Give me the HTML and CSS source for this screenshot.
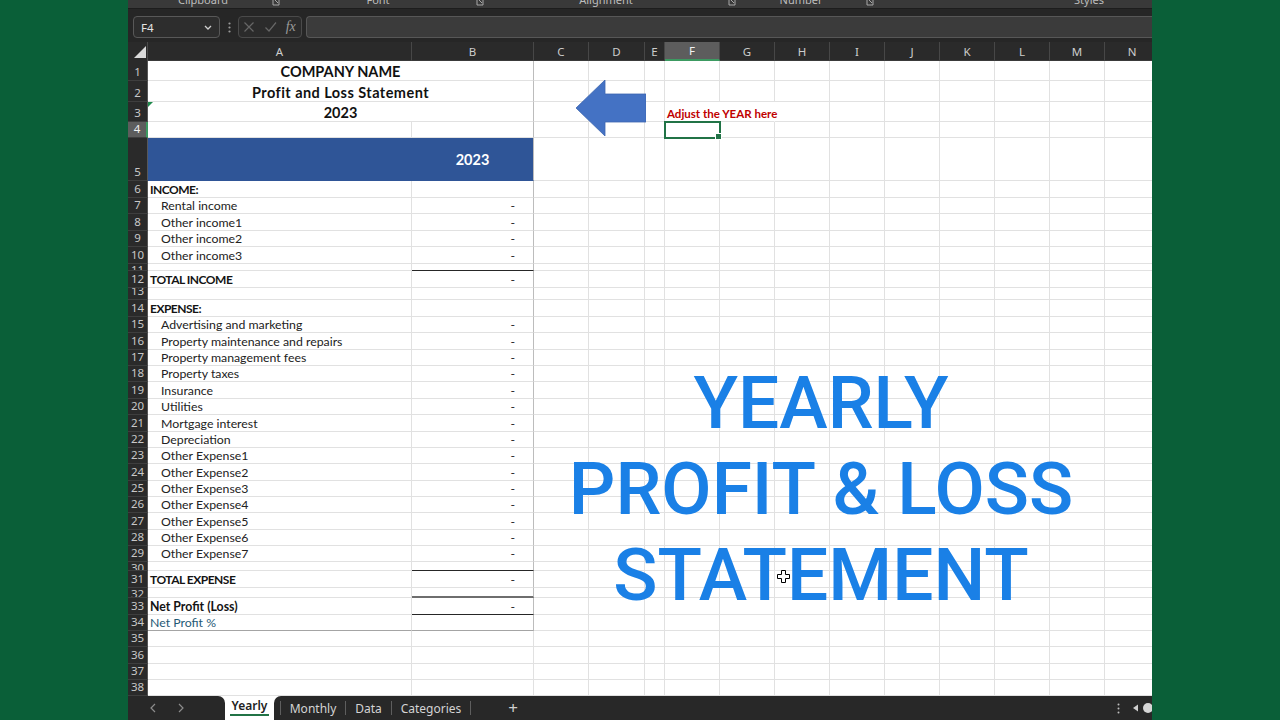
FILE: index.html
```html
<!DOCTYPE html>
<html lang="en">
<head>
<meta charset="utf-8">
<title>Yearly Profit &amp; Loss Statement</title>
<link rel="stylesheet" href="styles.css">
</head>
<body>
<div class="stage">
  <div class="excel">
    <div class="ribbon">
      <div class="grp g1"><span class="lbl">Clipboard</span><span class="lau"><svg viewBox="0 0 8 6" width="8" height="6"><path d="M1 0v5h6V0" fill="none" stroke="#a8a8a8" stroke-width="1"/><path d="M3 0l3 3" stroke="#a8a8a8" stroke-width="1"/></svg></span></div>
      <div class="grp g2"><span class="lbl">Font</span><span class="lau"><svg viewBox="0 0 8 6" width="8" height="6"><path d="M1 0v5h6V0" fill="none" stroke="#a8a8a8" stroke-width="1"/><path d="M3 0l3 3" stroke="#a8a8a8" stroke-width="1"/></svg></span></div>
      <div class="grp g3"><span class="lbl">Alignment</span><span class="lau"><svg viewBox="0 0 8 6" width="8" height="6"><path d="M1 0v5h6V0" fill="none" stroke="#a8a8a8" stroke-width="1"/><path d="M3 0l3 3" stroke="#a8a8a8" stroke-width="1"/></svg></span></div>
      <div class="grp g4"><span class="lbl">Number</span><span class="lau"><svg viewBox="0 0 8 6" width="8" height="6"><path d="M1 0v5h6V0" fill="none" stroke="#a8a8a8" stroke-width="1"/><path d="M3 0l3 3" stroke="#a8a8a8" stroke-width="1"/></svg></span></div>
      <div class="grp g5"><span class="lbl">Styles</span></div>
    </div>

    <div class="fbar">
      <div class="namebox"><span>F4</span><svg class="chev" viewBox="0 0 8 5" width="8" height="5"><path d="M1 1l3 3 3-3" fill="none" stroke="#d0d0d0" stroke-width="1.3"/></svg></div>
      <div class="dots"><svg viewBox="0 0 3 11" width="3" height="11"><circle cx="1.5" cy="1.5" r="1.1" fill="#9a9a9a"/><circle cx="1.5" cy="5.5" r="1.1" fill="#9a9a9a"/><circle cx="1.5" cy="9.5" r="1.1" fill="#9a9a9a"/></svg></div>
      <div class="fxbox">
        <span class="fxi"><svg viewBox="0 0 12 12" width="12" height="12"><path d="M1.5 1.5l9 9M10.5 1.5l-9 9" stroke="#666" stroke-width="1.2"/></svg></span>
        <span class="fxi"><svg viewBox="0 0 12 12" width="13" height="12"><path d="M1 6.5l3.5 3.5L11.5 1.5" fill="none" stroke="#666" stroke-width="1.2"/></svg></span>
        <span class="fxi fx">fx</span>
      </div>
      <div class="finput"></div>
    </div>

    <div class="sheet">
      <div class="row hdr">
        <div class="corner"><svg viewBox="0 0 20 19" width="20" height="19"><polygon points="18,4 18,16 6,16" fill="#dadada"/></svg></div>
        <div class="ch">A</div><div class="ch">B</div><div class="ch">C</div><div class="ch">D</div><div class="ch">E</div><div class="ch sel">F</div><div class="ch">G</div><div class="ch">H</div><div class="ch">I</div><div class="ch">J</div><div class="ch">K</div><div class="ch">L</div><div class="ch">M</div><div class="ch">N</div>
      </div>

      <div class="row h20"><div class="rh">1</div><div class="c m2 edge">COMPANY NAME</div><div class="c"></div><div class="c"></div><div class="c"></div><div class="c"></div><div class="c"></div><div class="c"></div><div class="c"></div><div class="c"></div><div class="c"></div><div class="c"></div><div class="c"></div><div class="c"></div></div>
      <div class="row h21"><div class="rh">2</div><div class="c m2 edge wide">Profit and Loss Statement</div><div class="c"></div><div class="c"></div><div class="c"></div><div class="c"></div><div class="c"></div><div class="c"></div><div class="c"></div><div class="c"></div><div class="c"></div><div class="c"></div><div class="c"></div><div class="c"></div></div>
      <div class="row h20"><div class="rh">3</div><div class="c m2 edge err">2023</div><div class="c"></div><div class="c"></div><div class="c"></div><div class="c note">Adjust the YEAR here</div><div class="c nob"></div><div class="c"></div><div class="c"></div><div class="c"></div><div class="c"></div><div class="c"></div><div class="c"></div><div class="c"></div></div>
      <div class="row h16"><div class="rh sel">4</div><div class="c"></div><div class="c edge"></div><div class="c"></div><div class="c"></div><div class="c"></div><div class="c sel"></div><div class="c"></div><div class="c"></div><div class="c"></div><div class="c"></div><div class="c"></div><div class="c"></div><div class="c"></div><div class="c"></div></div>
      <div class="row h43"><div class="rh">5</div><div class="c blueA"></div><div class="c blueB edge yr">2023</div><div class="c"></div><div class="c"></div><div class="c"></div><div class="c"></div><div class="c"></div><div class="c"></div><div class="c"></div><div class="c"></div><div class="c"></div><div class="c"></div><div class="c"></div><div class="c"></div></div>
      <div class="row h165"><div class="rh">6</div><div class="c bd cap">INCOME:</div><div class="c edge"></div><div class="c"></div><div class="c"></div><div class="c"></div><div class="c"></div><div class="c"></div><div class="c"></div><div class="c"></div><div class="c"></div><div class="c"></div><div class="c"></div><div class="c"></div><div class="c"></div></div>
      <div class="row h165"><div class="rh">7</div><div class="c in">Rental income</div><div class="c num edge">-</div><div class="c"></div><div class="c"></div><div class="c"></div><div class="c"></div><div class="c"></div><div class="c"></div><div class="c"></div><div class="c"></div><div class="c"></div><div class="c"></div><div class="c"></div><div class="c"></div></div>
      <div class="row h165"><div class="rh">8</div><div class="c in">Other income1</div><div class="c num edge">-</div><div class="c"></div><div class="c"></div><div class="c"></div><div class="c"></div><div class="c"></div><div class="c"></div><div class="c"></div><div class="c"></div><div class="c"></div><div class="c"></div><div class="c"></div><div class="c"></div></div>
      <div class="row h165"><div class="rh">9</div><div class="c in">Other income2</div><div class="c num edge">-</div><div class="c"></div><div class="c"></div><div class="c"></div><div class="c"></div><div class="c"></div><div class="c"></div><div class="c"></div><div class="c"></div><div class="c"></div><div class="c"></div><div class="c"></div><div class="c"></div></div>
      <div class="row h165"><div class="rh">10</div><div class="c in">Other income3</div><div class="c num edge">-</div><div class="c"></div><div class="c"></div><div class="c"></div><div class="c"></div><div class="c"></div><div class="c"></div><div class="c"></div><div class="c"></div><div class="c"></div><div class="c"></div><div class="c"></div><div class="c"></div></div>
      <div class="row h75"><div class="rh top">11</div><div class="c"></div><div class="c edge tl"></div><div class="c"></div><div class="c"></div><div class="c"></div><div class="c"></div><div class="c"></div><div class="c"></div><div class="c"></div><div class="c"></div><div class="c"></div><div class="c"></div><div class="c"></div><div class="c"></div></div>
      <div class="row h17"><div class="rh">12</div><div class="c bd cap">TOTAL INCOME</div><div class="c num edge">-</div><div class="c"></div><div class="c"></div><div class="c"></div><div class="c"></div><div class="c"></div><div class="c"></div><div class="c"></div><div class="c"></div><div class="c"></div><div class="c"></div><div class="c"></div><div class="c"></div></div>
      <div class="row h12"><div class="rh">13</div><div class="c"></div><div class="c edge"></div><div class="c"></div><div class="c"></div><div class="c"></div><div class="c"></div><div class="c"></div><div class="c"></div><div class="c"></div><div class="c"></div><div class="c"></div><div class="c"></div><div class="c"></div><div class="c"></div></div>
      <div class="row h17"><div class="rh">14</div><div class="c bd cap">EXPENSE:</div><div class="c edge"></div><div class="c"></div><div class="c"></div><div class="c"></div><div class="c"></div><div class="c"></div><div class="c"></div><div class="c"></div><div class="c"></div><div class="c"></div><div class="c"></div><div class="c"></div><div class="c"></div></div>
      <div class="row hn"><div class="rh">15</div><div class="c in">Advertising and marketing</div><div class="c num edge">-</div><div class="c"></div><div class="c"></div><div class="c"></div><div class="c"></div><div class="c"></div><div class="c"></div><div class="c"></div><div class="c"></div><div class="c"></div><div class="c"></div><div class="c"></div><div class="c"></div></div>
      <div class="row hn"><div class="rh">16</div><div class="c in">Property maintenance and repairs</div><div class="c num edge">-</div><div class="c"></div><div class="c"></div><div class="c"></div><div class="c"></div><div class="c"></div><div class="c"></div><div class="c"></div><div class="c"></div><div class="c"></div><div class="c"></div><div class="c"></div><div class="c"></div></div>
      <div class="row hn"><div class="rh">17</div><div class="c in">Property management fees</div><div class="c num edge">-</div><div class="c"></div><div class="c"></div><div class="c"></div><div class="c"></div><div class="c"></div><div class="c"></div><div class="c"></div><div class="c"></div><div class="c"></div><div class="c"></div><div class="c"></div><div class="c"></div></div>
      <div class="row hn"><div class="rh">18</div><div class="c in">Property taxes</div><div class="c num edge">-</div><div class="c"></div><div class="c"></div><div class="c"></div><div class="c"></div><div class="c"></div><div class="c"></div><div class="c"></div><div class="c"></div><div class="c"></div><div class="c"></div><div class="c"></div><div class="c"></div></div>
      <div class="row hn"><div class="rh">19</div><div class="c in">Insurance</div><div class="c num edge">-</div><div class="c"></div><div class="c"></div><div class="c"></div><div class="c"></div><div class="c"></div><div class="c"></div><div class="c"></div><div class="c"></div><div class="c"></div><div class="c"></div><div class="c"></div><div class="c"></div></div>
      <div class="row hn"><div class="rh">20</div><div class="c in">Utilities</div><div class="c num edge">-</div><div class="c"></div><div class="c"></div><div class="c"></div><div class="c"></div><div class="c"></div><div class="c"></div><div class="c"></div><div class="c"></div><div class="c"></div><div class="c"></div><div class="c"></div><div class="c"></div></div>
      <div class="row hn"><div class="rh">21</div><div class="c in">Mortgage interest</div><div class="c num edge">-</div><div class="c"></div><div class="c"></div><div class="c"></div><div class="c"></div><div class="c"></div><div class="c"></div><div class="c"></div><div class="c"></div><div class="c"></div><div class="c"></div><div class="c"></div><div class="c"></div></div>
      <div class="row hn"><div class="rh">22</div><div class="c in">Depreciation</div><div class="c num edge">-</div><div class="c"></div><div class="c"></div><div class="c"></div><div class="c"></div><div class="c"></div><div class="c"></div><div class="c"></div><div class="c"></div><div class="c"></div><div class="c"></div><div class="c"></div><div class="c"></div></div>
      <div class="row hn"><div class="rh">23</div><div class="c in">Other Expense1</div><div class="c num edge">-</div><div class="c"></div><div class="c"></div><div class="c"></div><div class="c"></div><div class="c"></div><div class="c"></div><div class="c"></div><div class="c"></div><div class="c"></div><div class="c"></div><div class="c"></div><div class="c"></div></div>
      <div class="row hn"><div class="rh">24</div><div class="c in">Other Expense2</div><div class="c num edge">-</div><div class="c"></div><div class="c"></div><div class="c"></div><div class="c"></div><div class="c"></div><div class="c"></div><div class="c"></div><div class="c"></div><div class="c"></div><div class="c"></div><div class="c"></div><div class="c"></div></div>
      <div class="row hn"><div class="rh">25</div><div class="c in">Other Expense3</div><div class="c num edge">-</div><div class="c"></div><div class="c"></div><div class="c"></div><div class="c"></div><div class="c"></div><div class="c"></div><div class="c"></div><div class="c"></div><div class="c"></div><div class="c"></div><div class="c"></div><div class="c"></div></div>
      <div class="row hn"><div class="rh">26</div><div class="c in">Other Expense4</div><div class="c num edge">-</div><div class="c"></div><div class="c"></div><div class="c"></div><div class="c"></div><div class="c"></div><div class="c"></div><div class="c"></div><div class="c"></div><div class="c"></div><div class="c"></div><div class="c"></div><div class="c"></div></div>
      <div class="row hn"><div class="rh">27</div><div class="c in">Other Expense5</div><div class="c num edge">-</div><div class="c"></div><div class="c"></div><div class="c"></div><div class="c"></div><div class="c"></div><div class="c"></div><div class="c"></div><div class="c"></div><div class="c"></div><div class="c"></div><div class="c"></div><div class="c"></div></div>
      <div class="row hn"><div class="rh">28</div><div class="c in">Other Expense6</div><div class="c num edge">-</div><div class="c"></div><div class="c"></div><div class="c"></div><div class="c"></div><div class="c"></div><div class="c"></div><div class="c"></div><div class="c"></div><div class="c"></div><div class="c"></div><div class="c"></div><div class="c"></div></div>
      <div class="row hn"><div class="rh">29</div><div class="c in">Other Expense7</div><div class="c num edge">-</div><div class="c"></div><div class="c"></div><div class="c"></div><div class="c"></div><div class="c"></div><div class="c"></div><div class="c"></div><div class="c"></div><div class="c"></div><div class="c"></div><div class="c"></div><div class="c"></div></div>
      <div class="row h86"><div class="rh top">30</div><div class="c"></div><div class="c edge tl"></div><div class="c"></div><div class="c"></div><div class="c"></div><div class="c"></div><div class="c"></div><div class="c"></div><div class="c"></div><div class="c"></div><div class="c"></div><div class="c"></div><div class="c"></div><div class="c"></div></div>
      <div class="row h17"><div class="rh">31</div><div class="c bd cap">TOTAL EXPENSE</div><div class="c num edge">-</div><div class="c"></div><div class="c"></div><div class="c"></div><div class="c"></div><div class="c"></div><div class="c"></div><div class="c"></div><div class="c"></div><div class="c"></div><div class="c"></div><div class="c"></div><div class="c"></div></div>
      <div class="row h10"><div class="rh top">32</div><div class="c"></div><div class="c edge tl2"></div><div class="c"></div><div class="c"></div><div class="c"></div><div class="c"></div><div class="c"></div><div class="c"></div><div class="c"></div><div class="c"></div><div class="c"></div><div class="c"></div><div class="c"></div><div class="c"></div></div>
      <div class="row h17"><div class="rh">33</div><div class="c bd">Net Profit (Loss)</div><div class="c num edge tl">-</div><div class="c"></div><div class="c"></div><div class="c"></div><div class="c"></div><div class="c"></div><div class="c"></div><div class="c"></div><div class="c"></div><div class="c"></div><div class="c"></div><div class="c"></div><div class="c"></div></div>
      <div class="row h162"><div class="rh">34</div><div class="c teal bt">Net Profit %</div><div class="c edge bt"></div><div class="c"></div><div class="c"></div><div class="c"></div><div class="c"></div><div class="c"></div><div class="c"></div><div class="c"></div><div class="c"></div><div class="c"></div><div class="c"></div><div class="c"></div><div class="c"></div></div>
      <div class="row h162"><div class="rh">35</div><div class="c"></div><div class="c"></div><div class="c"></div><div class="c"></div><div class="c"></div><div class="c"></div><div class="c"></div><div class="c"></div><div class="c"></div><div class="c"></div><div class="c"></div><div class="c"></div><div class="c"></div><div class="c"></div></div>
      <div class="row h162"><div class="rh">36</div><div class="c"></div><div class="c"></div><div class="c"></div><div class="c"></div><div class="c"></div><div class="c"></div><div class="c"></div><div class="c"></div><div class="c"></div><div class="c"></div><div class="c"></div><div class="c"></div><div class="c"></div><div class="c"></div></div>
      <div class="row h162"><div class="rh">37</div><div class="c"></div><div class="c"></div><div class="c"></div><div class="c"></div><div class="c"></div><div class="c"></div><div class="c"></div><div class="c"></div><div class="c"></div><div class="c"></div><div class="c"></div><div class="c"></div><div class="c"></div><div class="c"></div></div>
      <div class="row h162"><div class="rh">38</div><div class="c"></div><div class="c"></div><div class="c"></div><div class="c"></div><div class="c"></div><div class="c"></div><div class="c"></div><div class="c"></div><div class="c"></div><div class="c"></div><div class="c"></div><div class="c"></div><div class="c"></div><div class="c"></div></div>

      <svg class="arrow" viewBox="0 0 70 56" width="70" height="56"><polygon points="0,28 29,0 29,14 70,14 70,42 29,42 29,56" fill="#4472c4" stroke="#3d66b0" stroke-width="0.8"/></svg>

      <div class="title">
        <div>YEARLY</div>
        <div>PROFIT &amp; LOSS</div>
        <div>STATEMENT</div>
      </div>

      <svg class="cursor" viewBox="0 0 13 13" width="13" height="13"><path d="M4.5 0.5h4v4h4v4h-4v4h-4v-4h-4v-4h4z" fill="#fff" stroke="#000" stroke-width="1"/></svg>
    </div>

    <div class="tabs">
      <div class="nav">
        <svg class="navi" viewBox="0 0 6 10" width="6" height="10"><path d="M5 1L1 5l4 4" fill="none" stroke="#8c8c8c" stroke-width="1.2"/></svg>
        <svg class="navi" viewBox="0 0 6 10" width="6" height="10"><path d="M1 1l4 4-4 4" fill="none" stroke="#8c8c8c" stroke-width="1.2"/></svg>
      </div>
      <div class="active"><span>Yearly</span></div>
      <div class="rest">
        <span class="sep"></span>
        <span class="tab t1">Monthly</span>
        <span class="sep"></span>
        <span class="tab t2">Data</span>
        <span class="sep"></span>
        <span class="tab t3">Categories</span>
        <span class="sep"></span>
        <span class="plus">+</span>
        <span class="spacer"></span>
        <span class="more"><svg viewBox="0 0 3 11" width="3" height="11"><circle cx="1.5" cy="1.5" r="1" fill="#bdbdbd"/><circle cx="1.5" cy="5.5" r="1" fill="#bdbdbd"/><circle cx="1.5" cy="9.5" r="1" fill="#bdbdbd"/></svg></span>
        <span class="scr"><svg viewBox="0 0 24 24" width="24" height="24"><polygon points="5,12 10,8.5 10,15.5" fill="#cfcfcf"/><circle cx="20" cy="12" r="5" fill="#d6d6d6"/></svg></span>
      </div>
    </div>
  </div>
</div>
</body>
</html>
```

FILE: styles.css
```css
* { box-sizing: border-box; }
html, body { margin: 0; padding: 0; }
body {
  width: 1280px;
  height: 720px;
  overflow: hidden;
  background: #0a5f38;
  font-family: "Noto Sans", "DejaVu Sans", sans-serif;
}

.stage {
  display: flex;
  width: 1280px;
  height: 720px;
  padding-left: 128px;
  background: #0a5f38;
}

.excel {
  width: 1024px;
  height: 720px;
  display: flex;
  flex-direction: column;
  overflow: hidden;
  background: #282828;
}

/* ribbon remnant */
.ribbon {
  height: 8px;
  flex: none;
  display: flex;
  background: #393939;
  overflow: hidden;
  padding-left: 9px;
}
.grp { display: flex; flex: none; }
.g1 { width: 146px; }
.g2 { width: 204px; }
.g3 { width: 252px; }
.g4 { width: 138px; }
.g5 { width: 410px; padding-left: 14px; }
.lbl {
  flex: 1;
  text-align: center;
  font-size: 11px;
  line-height: 12px;
  color: #bdbdbd;
  margin-top: -6px;
}
.lau { width: 14px; display: flex; justify-content: center; align-items: flex-start; }

/* formula bar */
.fbar {
  height: 34px;
  flex: none;
  display: flex;
  align-items: flex-start;
  padding: 7px 0 0 5px;
  background: #262626;
  border-top: 1px solid #1d1d1d;
}
.namebox {
  width: 87px;
  height: 22px;
  display: flex;
  align-items: center;
  justify-content: space-between;
  padding: 0 7px 0 7px;
  background: #2d2d2d;
  border: 1px solid #585858;
  border-radius: 4px;
  color: #e4e4e4;
  font-size: 11.5px;
}
.dots { width: 18px; height: 22px; display: flex; align-items: center; justify-content: center; }
.fxbox {
  width: 64px;
  height: 22px;
  display: flex;
  align-items: center;
  background: #2b2b2b;
  border: 1px solid #4a4a4a;
  border-radius: 4px;
}
.fxi { width: 21px; display: flex; justify-content: center; align-items: center; }
.fx {
  font-family: "Liberation Serif", serif;
  font-style: italic;
  font-size: 14px;
  color: #9a9a9a;
}
.finput {
  flex: 1;
  height: 22px;
  margin-left: 4px;
  background: #3b3b3b;
  border: 1px solid #575757;
  border-right: none;
  border-radius: 4px 0 0 4px;
}

/* sheet */
.sheet {
  flex: 1;
  position: relative;
  background: #ffffff;
  display: flex;
  flex-direction: column;
  overflow: hidden;
}
.row {
  display: grid;
  grid-template-columns: 20px 264px 122px 55px 56px 20px 55px 55px 55px 55px 55px 55px 55px 55px 55px;
  flex: none;
}
.hdr { height: 19px; background: #2a2a2a; }
.corner { background: #2a2a2a; border-right: 1px solid #4a4a4a; }
.corner svg { display: block; }
.ch {
  display: flex;
  align-items: center;
  justify-content: center;
  color: #cdcdcd;
  font-size: 11.5px;
  border-right: 1px solid #474747;
  border-bottom: 1px solid #3a3a3a;
}
.ch.sel {
  background: #5d5d5d;
  color: #f2f2f2;
  border-bottom: 2px solid #3c9a61;
}

.h20 { height: 20px; }
.h21 { height: 21px; }
.h16 { height: 16px; }
.h43 { height: 43px; }
.h165 { height: 16.5px; }
.h75 { height: 7.5px; }
.h17 { height: 17px; }
.h12 { height: 12px; }
.hn { height: 16.36px; }
.h86 { height: 8.6px; }
.h10 { height: 10px; }
.h162 { height: 16.2px; }

.rh {
  display: flex;
  align-items: flex-end;
  justify-content: center;
  overflow: hidden;
  background: #2a2a2a;
  color: #c8c8c8;
  font-size: 11.5px;
  line-height: 16px;
  border-bottom: 1px solid #3e3e3e;
  border-right: 1px solid #575757;
}
.rh.top { align-items: flex-start; line-height: 12px; }
.rh.sel {
  background: #5d5d5d;
  color: #f2f2f2;
  border-right: 2px solid #3c9a61;
}

.c {
  display: flex;
  align-items: flex-end;
  min-width: 0;
  padding: 0 2px;
  overflow: hidden;
  white-space: nowrap;
  font-family: Lato, "Open Sans", sans-serif;
  font-size: 12.3px;
  line-height: 14px;
  color: #222222;
  border-right: 1px solid #e1e1e1;
  border-bottom: 1px solid #e1e1e1;
}
.m2 {
  grid-column: span 2;
  justify-content: center;
  font-weight: 700;
  font-size: 14.5px;
  line-height: 16px;
  color: #111;
}
.wide { letter-spacing: 0.45px; }
.in { padding-left: 13px; }
.bd { font-weight: 700; color: #141414; }
.cap { font-size: 12px; letter-spacing: -0.5px; }
.num { justify-content: flex-end; padding-right: 18px; }
.edge { border-right-color: #bcbcbc; }
.blueA { background: #2f5597; border-right-color: #2f5597; border-bottom-color: #2f5597; }
.blueB { background: #2f5597; border-bottom-color: #2f5597; }
.yr {
  color: #ffffff;
  font-weight: 700;
  font-size: 14.5px;
  justify-content: center;
  align-items: center;
  padding-top: 2px;
}
.tl { border-bottom: 1px solid #262626; }
.tl2 { border-bottom: 2px solid #6e6e6e; }
.bt { border-bottom-color: #a4a4a4; }
.teal { color: #1f5a76; }
.err { position: relative; }
.err::before {
  content: "";
  position: absolute;
  left: 0;
  top: 0;
  border-top: 5px solid #1f8a4c;
  border-right: 5px solid transparent;
}
.note {
  overflow: visible;
  color: #c00000;
  font-weight: 700;
  font-size: 11.5px;
  line-height: 14px;
  border-right-color: transparent;
}
.nob { border-right-color: transparent; }
.c.sel {
  position: relative;
  overflow: visible;
  outline: 2px solid #217346;
  outline-offset: -1px;
}
.c.sel::after {
  content: "";
  position: absolute;
  right: -3px;
  bottom: -3px;
  width: 5px;
  height: 5px;
  background: #217346;
  border: 1px solid #ffffff;
}

/* floating shapes */
.arrow { position: absolute; left: 448px; top: 38px; }
.title {
  position: absolute;
  left: 412px;
  top: 318px;
  width: 562px;
  text-align: center;
  font-family: Roboto, "Noto Sans", sans-serif;
  font-weight: 500;
  font-size: 73px;
  line-height: 86px;
  color: #1a80e6;
  white-space: nowrap;
}
.cursor { position: absolute; left: 649px; top: 528px; }

/* sheet tabs */
.tabs {
  height: 24px;
  flex: none;
  display: flex;
  background: #ffffff;
}
.nav {
  width: 97px;
  display: flex;
  align-items: center;
  gap: 22px;
  padding-left: 22px;
  background: #282828;
  border-top-right-radius: 7px;
}
.active {
  width: 49px;
  display: flex;
  justify-content: center;
  align-items: flex-start;
  padding-top: 2px;
}
.active span {
  font-size: 12px;
  font-weight: 600;
  line-height: 16px;
  color: #222;
  padding: 0 2px;
  border-bottom: 2px solid #217346;
}
.rest {
  flex: 1;
  display: flex;
  align-items: center;
  padding-left: 6px;
  background: #282828;
  border-top-left-radius: 7px;
}
.sep { width: 1px; height: 14px; background: #5e5e5e; flex: none; }
.tab {
  display: flex;
  justify-content: center;
  font-size: 12px;
  color: #d4d4d4;
  flex: none;
}
.t1 { width: 64px; }
.t2 { width: 45px; }
.t3 { width: 78px; }
.plus {
  width: 14px;
  margin-left: 35px;
  text-align: center;
  color: #cfcfcf;
  font-size: 17px;
  line-height: 20px;
}
.spacer { flex: 1; }
.more { width: 20px; display: flex; justify-content: center; }
.scr { width: 24px; height: 24px; }
.scr svg { display: block; }
```
